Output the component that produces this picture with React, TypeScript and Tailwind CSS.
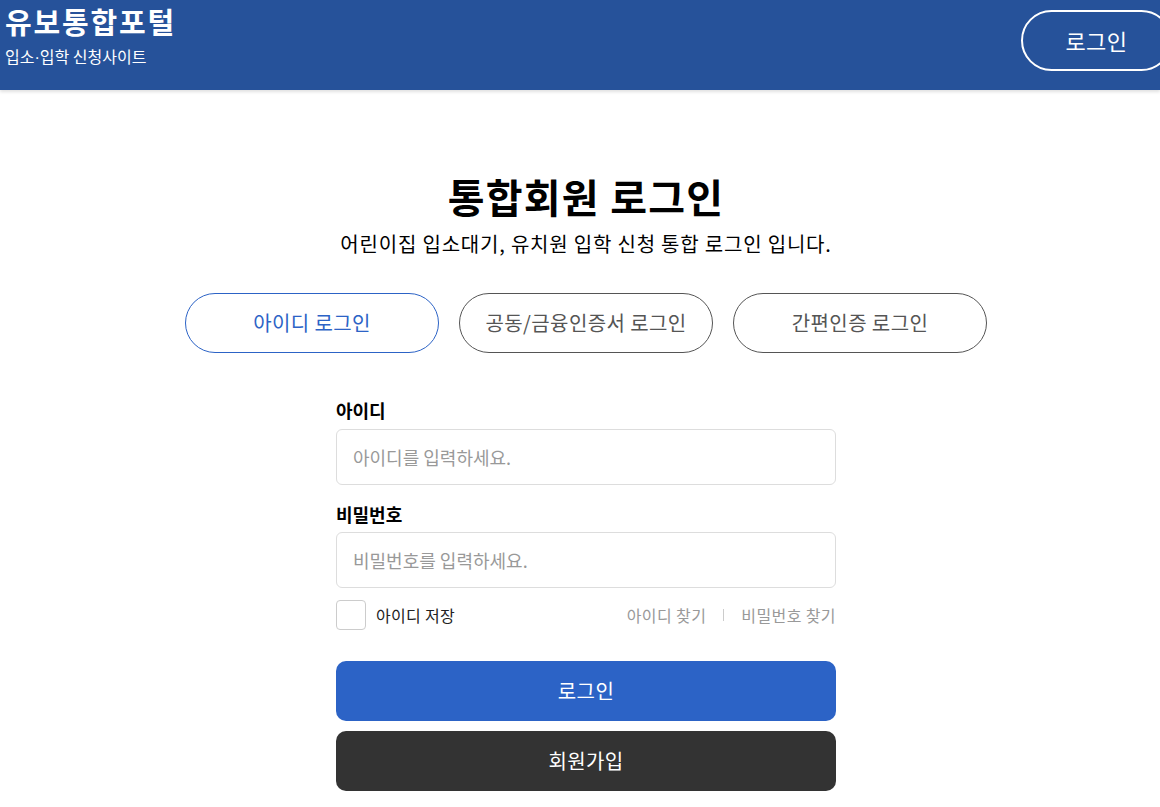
export default function App() {
  const tabs = ['아이디 로그인', '공동/금융인증서 로그인', '간편인증 로그인']

  return (
    <div className="min-h-[807px] bg-white overflow-hidden" style={{ fontFamily: '"Noto Sans CJK KR", "Noto Sans", sans-serif' }}>
      {/* Header */}
      <header className="h-[90px] bg-[#26529a] flex items-start justify-between pl-[5px] shadow-[0_2px_3px_rgba(0,0,0,0.12)]">
        <div className="pt-[1px]">
          <h1 className="text-[29px] font-bold text-white leading-[40px] tracking-[1.8px]">유보통합포털</h1>
          <p className="text-[16px] text-white leading-[20px] mt-[5px]">
            입소<span style={{ fontFamily: '"Liberation Sans", sans-serif' }}>·</span>입학 신청사이트
          </p>
        </div>
        <button className="mt-[10px] -mr-[12px] w-[151px] h-[61px] shrink-0 rounded-full border-2 border-white text-white text-[22px] tracking-[0.5px]">
          로그인
        </button>
      </header>

      {/* Main */}
      <main className="flex flex-col items-center pl-[12px]">
        <h2 className="mt-[78px] text-[40px] font-bold text-black leading-[56px] tracking-[1.2px]">통합회원 로그인</h2>
        <p className="mt-[6px] text-[20px] text-black leading-[28px] tracking-[0.8px]">어린이집 입소대기, 유치원 입학 신청 통합 로그인 입니다.</p>

        <div className="mt-[35px] flex gap-[20px]">
          {tabs.map((t, i) => (
            <button
              key={t}
              className={
                i === 0
                  ? 'w-[254px] h-[60px] rounded-full border border-[#2c63c6] text-[#2c63c6] text-[20px] tracking-[0.4px]'
                  : 'w-[254px] h-[60px] rounded-full border border-[#555] text-[#555] text-[20px] tracking-[0.4px]'
              }
            >
              {t}
            </button>
          ))}
        </div>

        <form className="w-[500px] mt-[44px]">
          <label className="block text-[18px] font-bold text-black leading-[26px]">아이디</label>
          <input
            className="mt-[6px] w-full h-[56px] rounded-[6px] border border-[#ddd] px-[16px] text-[18px] placeholder:text-[#999] outline-none"
            placeholder="아이디를 입력하세요."
          />
          <label className="block mt-[16px] text-[18px] font-bold text-black leading-[26px]">비밀번호</label>
          <input
            type="password"
            className="mt-[5px] w-full h-[56px] rounded-[6px] border border-[#ddd] px-[16px] text-[18px] placeholder:text-[#999] outline-none"
            placeholder="비밀번호를 입력하세요."
          />

          <div className="mt-[12px] flex items-center justify-between">
            <label className="flex items-center gap-[10px]">
              <span className="w-[30px] h-[30px] rounded-[4px] border border-[#ccc] bg-white" />
              <span className="text-[16px] text-[#222] tracking-[0.3px]">아이디 저장</span>
            </label>
            <div className="flex items-center text-[16px] text-[#999] tracking-[0.4px]">
              <span>아이디 찾기</span>
              <span className="mx-[17px] w-px h-[12px] bg-[#ccc]" />
              <span>비밀번호 찾기</span>
            </div>
          </div>

          <button type="button" className="mt-[31px] w-full h-[60px] rounded-[10px] bg-[#2c63c6] text-white text-[20px] tracking-[0.4px]">
            로그인
          </button>
          <button type="button" className="mt-[10px] w-full h-[60px] rounded-[10px] bg-[#333] text-white text-[20px] tracking-[0.4px]">
            회원가입
          </button>
        </form>
      </main>
    </div>
  )
}
